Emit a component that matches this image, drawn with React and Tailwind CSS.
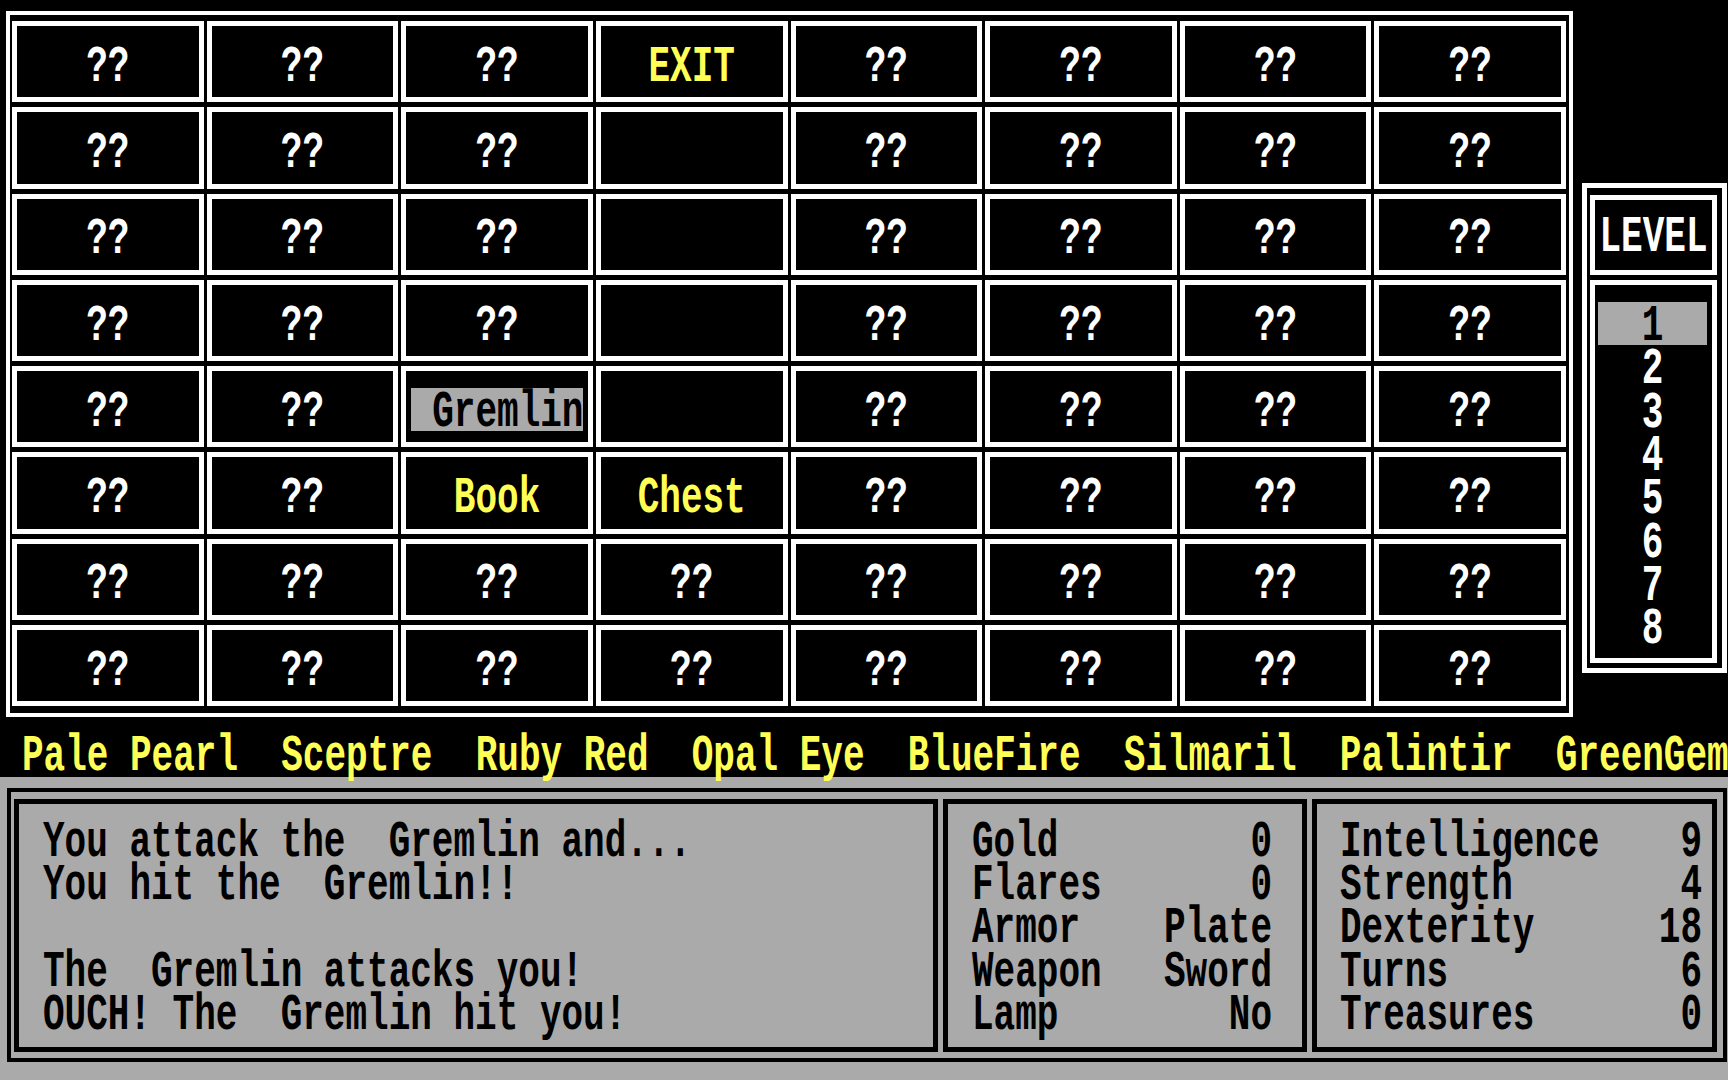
const Q = '??';

const board = [
  [Q, Q, Q, 'EXIT', Q, Q, Q, Q],
  [Q, Q, Q, '', Q, Q, Q, Q],
  [Q, Q, Q, '', Q, Q, Q, Q],
  [Q, Q, Q, '', Q, Q, Q, Q],
  [Q, Q, 'Gremlin', '', Q, Q, Q, Q],
  [Q, Q, 'Book', 'Chest', Q, Q, Q, Q],
  [Q, Q, Q, Q, Q, Q, Q, Q],
  [Q, Q, Q, Q, Q, Q, Q, Q],
];

const yellowItems = ['EXIT', 'Book', 'Chest'];

const log = [
  'You attack the  Gremlin and...',
  'You hit the  Gremlin!!',
  '',
  'The  Gremlin attacks you!',
  'OUCH! The  Gremlin hit you!',
];

const gear = [
  ['Gold', '0'],
  ['Flares', '0'],
  ['Armor', 'Plate'],
  ['Weapon', 'Sword'],
  ['Lamp', 'No'],
];

const attrs = [
  ['Intelligence', '9'],
  ['Strength', '4'],
  ['Dexterity', '18'],
  ['Turns', '6'],
  ['Treasures', '0'],
];

// tall bitmap-looking text: stretch the mono font vertically
function Tall({ children }) {
  return (
    <span className="inline-block whitespace-pre leading-[29.9px] scale-y-[1.45] translate-y-[3px]">
      {children}
    </span>
  );
}

function Cell({ label }) {
  if (label === 'Gremlin') {
    return (
      <div className="border-[5px] border-white flex items-center justify-center pt-[6px]">
        <div className="bg-[#aaaaaa] text-black h-[43.3px]">
          <Tall>{' Gremlin'}</Tall>
        </div>
      </div>
    );
  }
  return (
    <div
      className={`border-[5px] border-white flex items-center justify-center pt-[6px] ${
        yellowItems.includes(label) ? 'text-[#ffff55]' : 'text-white'
      }`}
    >
      <div className="h-[43.3px]">
        <Tall>{label}</Tall>
      </div>
    </div>
  );
}

export default function App() {
  return (
    <div className="w-[1728px] h-[1080px] overflow-hidden bg-black flex flex-col font-['Liberation_Mono',monospace] font-bold text-[36px] leading-[43.3px]">
      {/* dungeon map + level selector */}
      <div className="flex pt-[11px] h-[717px]">
        <div className="ml-[6px] w-[1567px] h-[706px] border-4 border-white pt-[6px] pb-[7px] pl-[2px] pr-[3px]">
          <div className="grid grid-cols-8 grid-rows-8 gap-x-[3px] gap-y-[5px] h-full">
            {board.map((row, r) =>
              row.map((label, c) => <Cell key={`${r}-${c}`} label={label} />)
            )}
          </div>
        </div>

        <div className="ml-[9px] mt-[172px] w-[145px] h-[490px] border-[5px] border-white flex flex-col gap-[5px] pt-[7px] pl-[3px] pr-[5px] pb-[5px]">
          <div className="h-[80px] border-[5px] border-white flex items-center justify-center text-white">
            <div className="h-[43.3px]">
              <Tall>LEVEL</Tall>
            </div>
          </div>
          <div className="flex-1 border-[5px] border-white pt-[17px] pl-[3px] pr-[5px]">
            {[1, 2, 3, 4, 5, 6, 7, 8].map((n) => (
              <div
                key={n}
                className={`h-[43.4px] flex items-center justify-center ${
                  n === 1 ? 'bg-[#aaaaaa] text-black' : 'text-white'
                }`}
              >
                <Tall>{n}</Tall>
              </div>
            ))}
          </div>
        </div>
      </div>

      {/* treasures */}
      <div className="h-[60px] pt-[15px] pl-[22px] text-[#ffff55] whitespace-pre">
        <Tall>Pale Pearl  Sceptre  Ruby Red  Opal Eye  BlueFire  Silmaril  Palintir  GreenGem</Tall>
      </div>

      {/* status area */}
      <div className="flex-1 bg-[#aaaaaa] pt-[11px] pl-[7px] text-black">
        <div className="w-[1720px] h-[274px] border-4 border-black flex gap-[5px] pt-[7px] pb-[6px] pl-[3px] pr-[6px]">
          <div className="w-[924px] border-[5px] border-black pt-[14px] pl-[24px]">
            {log.map((line, i) => (
              <div key={i} className="h-[43.3px]">
                <Tall>{line}</Tall>
              </div>
            ))}
          </div>
          <div className="w-[364px] border-[5px] border-black pt-[14px] pl-[24px] pr-[30px]">
            {gear.map(([k, v]) => (
              <div key={k} className="h-[43.3px] flex items-center justify-between">
                <Tall>{k}</Tall>
                <Tall>{v}</Tall>
              </div>
            ))}
          </div>
          <div className="flex-1 border-[5px] border-black pt-[14px] pl-[23px] pr-[10px]">
            {attrs.map(([k, v]) => (
              <div key={k} className="h-[43.3px] flex items-center justify-between">
                <Tall>{k}</Tall>
                <Tall>{v}</Tall>
              </div>
            ))}
          </div>
        </div>
      </div>
    </div>
  );
}
